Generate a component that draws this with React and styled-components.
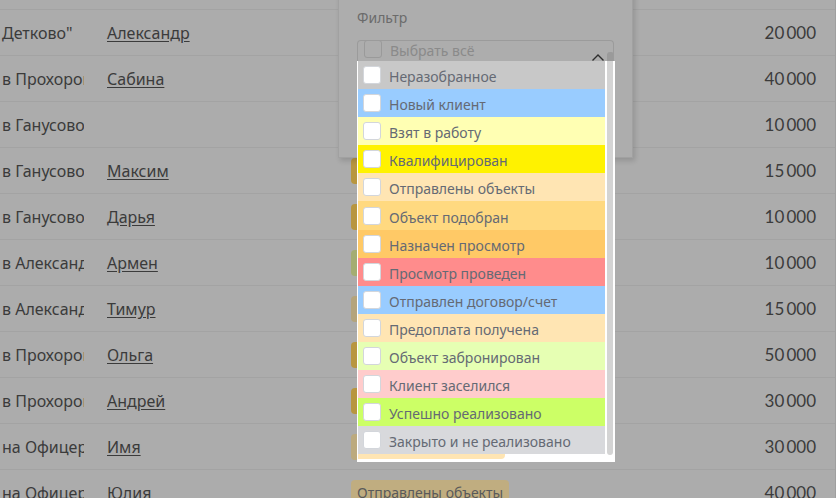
import React from "react";
import styled, { createGlobalStyle } from "styled-components";

const GlobalStyle = createGlobalStyle`
  html, body { margin: 0; padding: 0; }
  body {
    background: #acacac;
    font-family: "Noto Sans", "DejaVu Sans", sans-serif;
    overflow: hidden;
  }
  #root { width: 836px; height: 498px; }
`;

const Page = styled.div`
  position: relative;
  width: 836px;
  height: 498px;
  overflow: hidden;
  background: #acacac;
  border-right: 1px solid #9f9f9f;
  box-sizing: border-box;
`;

const Table = styled.div`
  padding-top: 9px;
`;

const Row = styled.div`
  display: grid;
  grid-template-columns: 107px 244px 1fr auto;
  align-items: center;
  height: 46px;
  box-sizing: border-box;
  border-top: 1px solid #a3a3a3;
  padding-right: 19px;
  color: #3b3b3b;
  font-size: 16px;
`;

const Address = styled.div`
  width: 82px;
  padding-left: 2px;
  overflow: hidden;
  white-space: nowrap;
`;

const Name = styled.a`
  color: #3b3b3b;
  text-decoration: underline;
  text-underline-offset: 2px;
  white-space: nowrap;
`;

const Tag = styled.span`
  justify-self: start;
  display: inline-flex;
  align-items: center;
  height: 26px;
  padding: 0 6px;
  border-radius: 4px;
  font-size: 14px;
  color: #5a5a5a;
  background: ${(p) => p.$bg};
  white-space: nowrap;
`;

const Amount = styled.div`
  font-family: Lato, "Noto Sans", sans-serif;
  font-size: 17px;
  text-align: right;
  color: #3b3b3b;
`;

const Modal = styled.section`
  position: absolute;
  left: 338px;
  top: -20px;
  width: 295px;
  height: 178px;
  box-sizing: border-box;
  background: #adadad;
  border: 1px solid #a1a1a1;
  box-shadow: 2px 3px 5px rgba(0, 0, 0, 0.14);
  padding: 28px 18px 0 18px;
`;

const Label = styled.div`
  font-size: 14px;
  line-height: 18px;
  color: #6b6b6b;
`;

const SelectHead = styled.div`
  position: relative;
  margin-top: 13px;
  height: 21px;
  box-sizing: border-box;
  border: 1px solid #9b9b9b;
  border-bottom: none;
  border-radius: 4px 4px 0 0;
  overflow: hidden;
`;

const Option = styled.div`
  flex-shrink: 0;
  display: flex;
  align-items: center;
  gap: 8px;
  height: ${(p) => (p.$dim ? "28px" : "28.1px")};
  margin-top: ${(p) => (p.$dim ? "-6px" : "0")};
  padding-left: ${(p) => (p.$dim ? "6px" : "5px")};
  box-sizing: border-box;
  background: ${(p) => p.$bg || "transparent"};
  font-size: 14px;
  color: ${(p) => (p.$dim ? "#8a8a8a" : "#656a74")};
  white-space: nowrap;
`;

const OptionText = styled.span`
  padding-top: 3px;
`;

const Check = styled.span`
  flex-shrink: 0;
  width: 18px;
  height: 18px;
  box-sizing: border-box;
  border-radius: 3px;
  border: 1px solid ${(p) => (p.$dim ? "#9a9a9a" : "#d3d6db")};
  background: ${(p) => (p.$dim ? "#adadad" : "#ffffff")};
`;

const Chevron = styled.svg`
  position: absolute;
  left: 233px;
  top: 12px;
`;

const HeadThumb = styled.span`
  position: absolute;
  left: 249px;
  top: 11px;
  width: 7px;
  height: 12px;
  border-radius: 3px 3px 0 0;
  background: #9a9a9a;
`;

const Dropdown = styled.div`
  position: absolute;
  left: 357px;
  top: 61px;
  width: 258px;
  height: 401px;
  box-sizing: border-box;
  background: #ffffff;
  display: flex;
  padding-left: 1px;
  z-index: 2;
`;

const List = styled.div`
  width: 247px;
  height: 400px;
  overflow: hidden;
  display: flex;
  flex-direction: column;
`;

const Peek = styled.div`
  flex-shrink: 0;
  width: 147px;
  height: 5px;
  background: #ffe5b3;
  border-radius: 0 0 4px 0;
`;

const ScrollCol = styled.div`
  width: 10px;
  padding: 0 2px;
  box-sizing: border-box;
`;

const Thumb = styled.div`
  width: 6px;
  height: 394px;
  background: #d4d4d4;
  border-radius: 0 0 3px 3px;
`;

const rows = [
  { addr: "Детково\"", name: "Александр", tag: ["Назначен просмотр", "#b8963f"], sum: "20 000" },
  { addr: "в Прохоровке", name: "Сабина", tag: ["Новый клиент", "#8ea7c0"], sum: "40 000" },
  { addr: "в Ганусово", name: "", tag: null, sum: "10 000" },
  { addr: "в Ганусово", name: "Максим", tag: ["Назначен просмотр", "#b8963f"], sum: "15 000" },
  { addr: "в Ганусово", name: "Дарья", tag: ["Назначен просмотр", "#b8963f"], sum: "10 000" },
  { addr: "в Александрове", name: "Армен", tag: ["Объект забронирован", "#a4ad72"], sum: "10 000" },
  { addr: "в Александрове", name: "Тимур", tag: ["Предоплата получена", "#b4a47c"], sum: "15 000" },
  { addr: "в Прохоровке", name: "Ольга", tag: ["Назначен просмотр", "#b8963f"], sum: "50 000" },
  { addr: "в Прохоровке", name: "Андрей", tag: ["Назначен просмотр", "#b8963f"], sum: "30 000" },
  { addr: "на Офицерской", name: "Имя", tag: ["Отправлены объекты", "#bcaa7e"], sum: "30 000" },
  { addr: "на Офицерской", name: "Юлия", tag: ["Отправлены объекты", "#c0ad80"], sum: "40 000" },
];

const statuses = [
  ["Неразобранное", "#c8c8c8"],
  ["Новый клиент", "#99ccff"],
  ["Взят в работу", "#ffffb3"],
  ["Квалифицирован", "#fff200"],
  ["Отправлены объекты", "#ffe5b3"],
  ["Объект подобран", "#ffd980"],
  ["Назначен просмотр", "#ffc966"],
  ["Просмотр проведен", "#ff8c8c"],
  ["Отправлен договор/счет", "#99ccff"],
  ["Предоплата получена", "#ffe5b3"],
  ["Объект забронирован", "#e6ffb3"],
  ["Клиент заселился", "#ffcccc"],
  ["Успешно реализовано", "#ccff66"],
  ["Закрыто и не реализовано", "#d8d9dc"],
];

export default function App() {
  return (
    <>
      <GlobalStyle />
      <Page>
        <Table>
          {rows.map((r, i) => (
            <Row key={i}>
              <Address>{r.addr}</Address>
              <div>{r.name && <Name>{r.name}</Name>}</div>
              <div>{r.tag && <Tag $bg={r.tag[1]}>{r.tag[0]}</Tag>}</div>
              <Amount>{r.sum.replace(" ", "\u2009")}</Amount>
            </Row>
          ))}
        </Table>

        <Modal>
          <Label>Фильтр</Label>
          <SelectHead>
            <Option $dim>
              <Check $dim />
              <OptionText>Выбрать всё</OptionText>
            </Option>
            <Chevron width="14" height="9" viewBox="0 0 14 9">
              <path d="M1.5 7.5 L7 2 L12.5 7.5" fill="none" stroke="#2e2e2e" strokeWidth="1.4" />
            </Chevron>
            <HeadThumb />
          </SelectHead>
        </Modal>

        <Dropdown>
          <List>
            {statuses.map(([label, bg]) => (
              <Option key={label} $bg={bg}>
                <Check />
                <OptionText>{label}</OptionText>
              </Option>
            ))}
            <Peek />
          </List>
          <ScrollCol>
            <Thumb />
          </ScrollCol>
        </Dropdown>
      </Page>
    </>
  );
}
